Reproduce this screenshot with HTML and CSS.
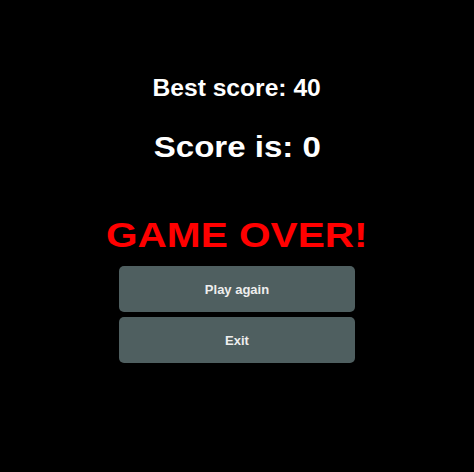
FILE: index.html
```html
<!DOCTYPE html>
<html>
<head>
<meta charset="utf-8">
<link rel="stylesheet" href="styles.css">
</head>
<body>
<main class="screen">
  <div class="best">Best score: 40</div>
  <div class="score">Score is: 0</div>
  <div class="over">GAME OVER!</div>
  <div class="buttons">
    <button class="btn">Play again</button>
    <button class="btn">Exit</button>
  </div>
</main>
</body>
</html>
```
FILE: styles.css
```css
html, body {
  margin: 0;
  padding: 0;
  background: #000;
  height: 100%;
}
.screen {
  display: flex;
  flex-direction: column;
  align-items: center;
  padding-top: 77px;
  font-family: "Liberation Sans", Arial, sans-serif;
  font-weight: bold;
  color: #fff;
}
.best {
  font-size: 23px;
  line-height: 1;
  transform: scaleX(1.07);
}
.score {
  font-size: 29px;
  line-height: 1;
  margin-top: 33px;
  transform: scaleX(1.14);
}
.over {
  font-size: 35px;
  line-height: 1;
  margin-top: 55px;
  color: #ff0000;
  transform: scaleX(1.16);
}
.buttons {
  margin-top: 14px;
  display: flex;
  flex-direction: column;
  gap: 5px;
}
.btn {
  width: 236px;
  height: 46px;
  border: none;
  border-radius: 5px;
  background: #4f5f60;
  color: #eeeeee;
  font-family: "Liberation Sans", Arial, sans-serif;
  font-weight: bold;
  font-size: 13px;
  padding: 0;
}
```
